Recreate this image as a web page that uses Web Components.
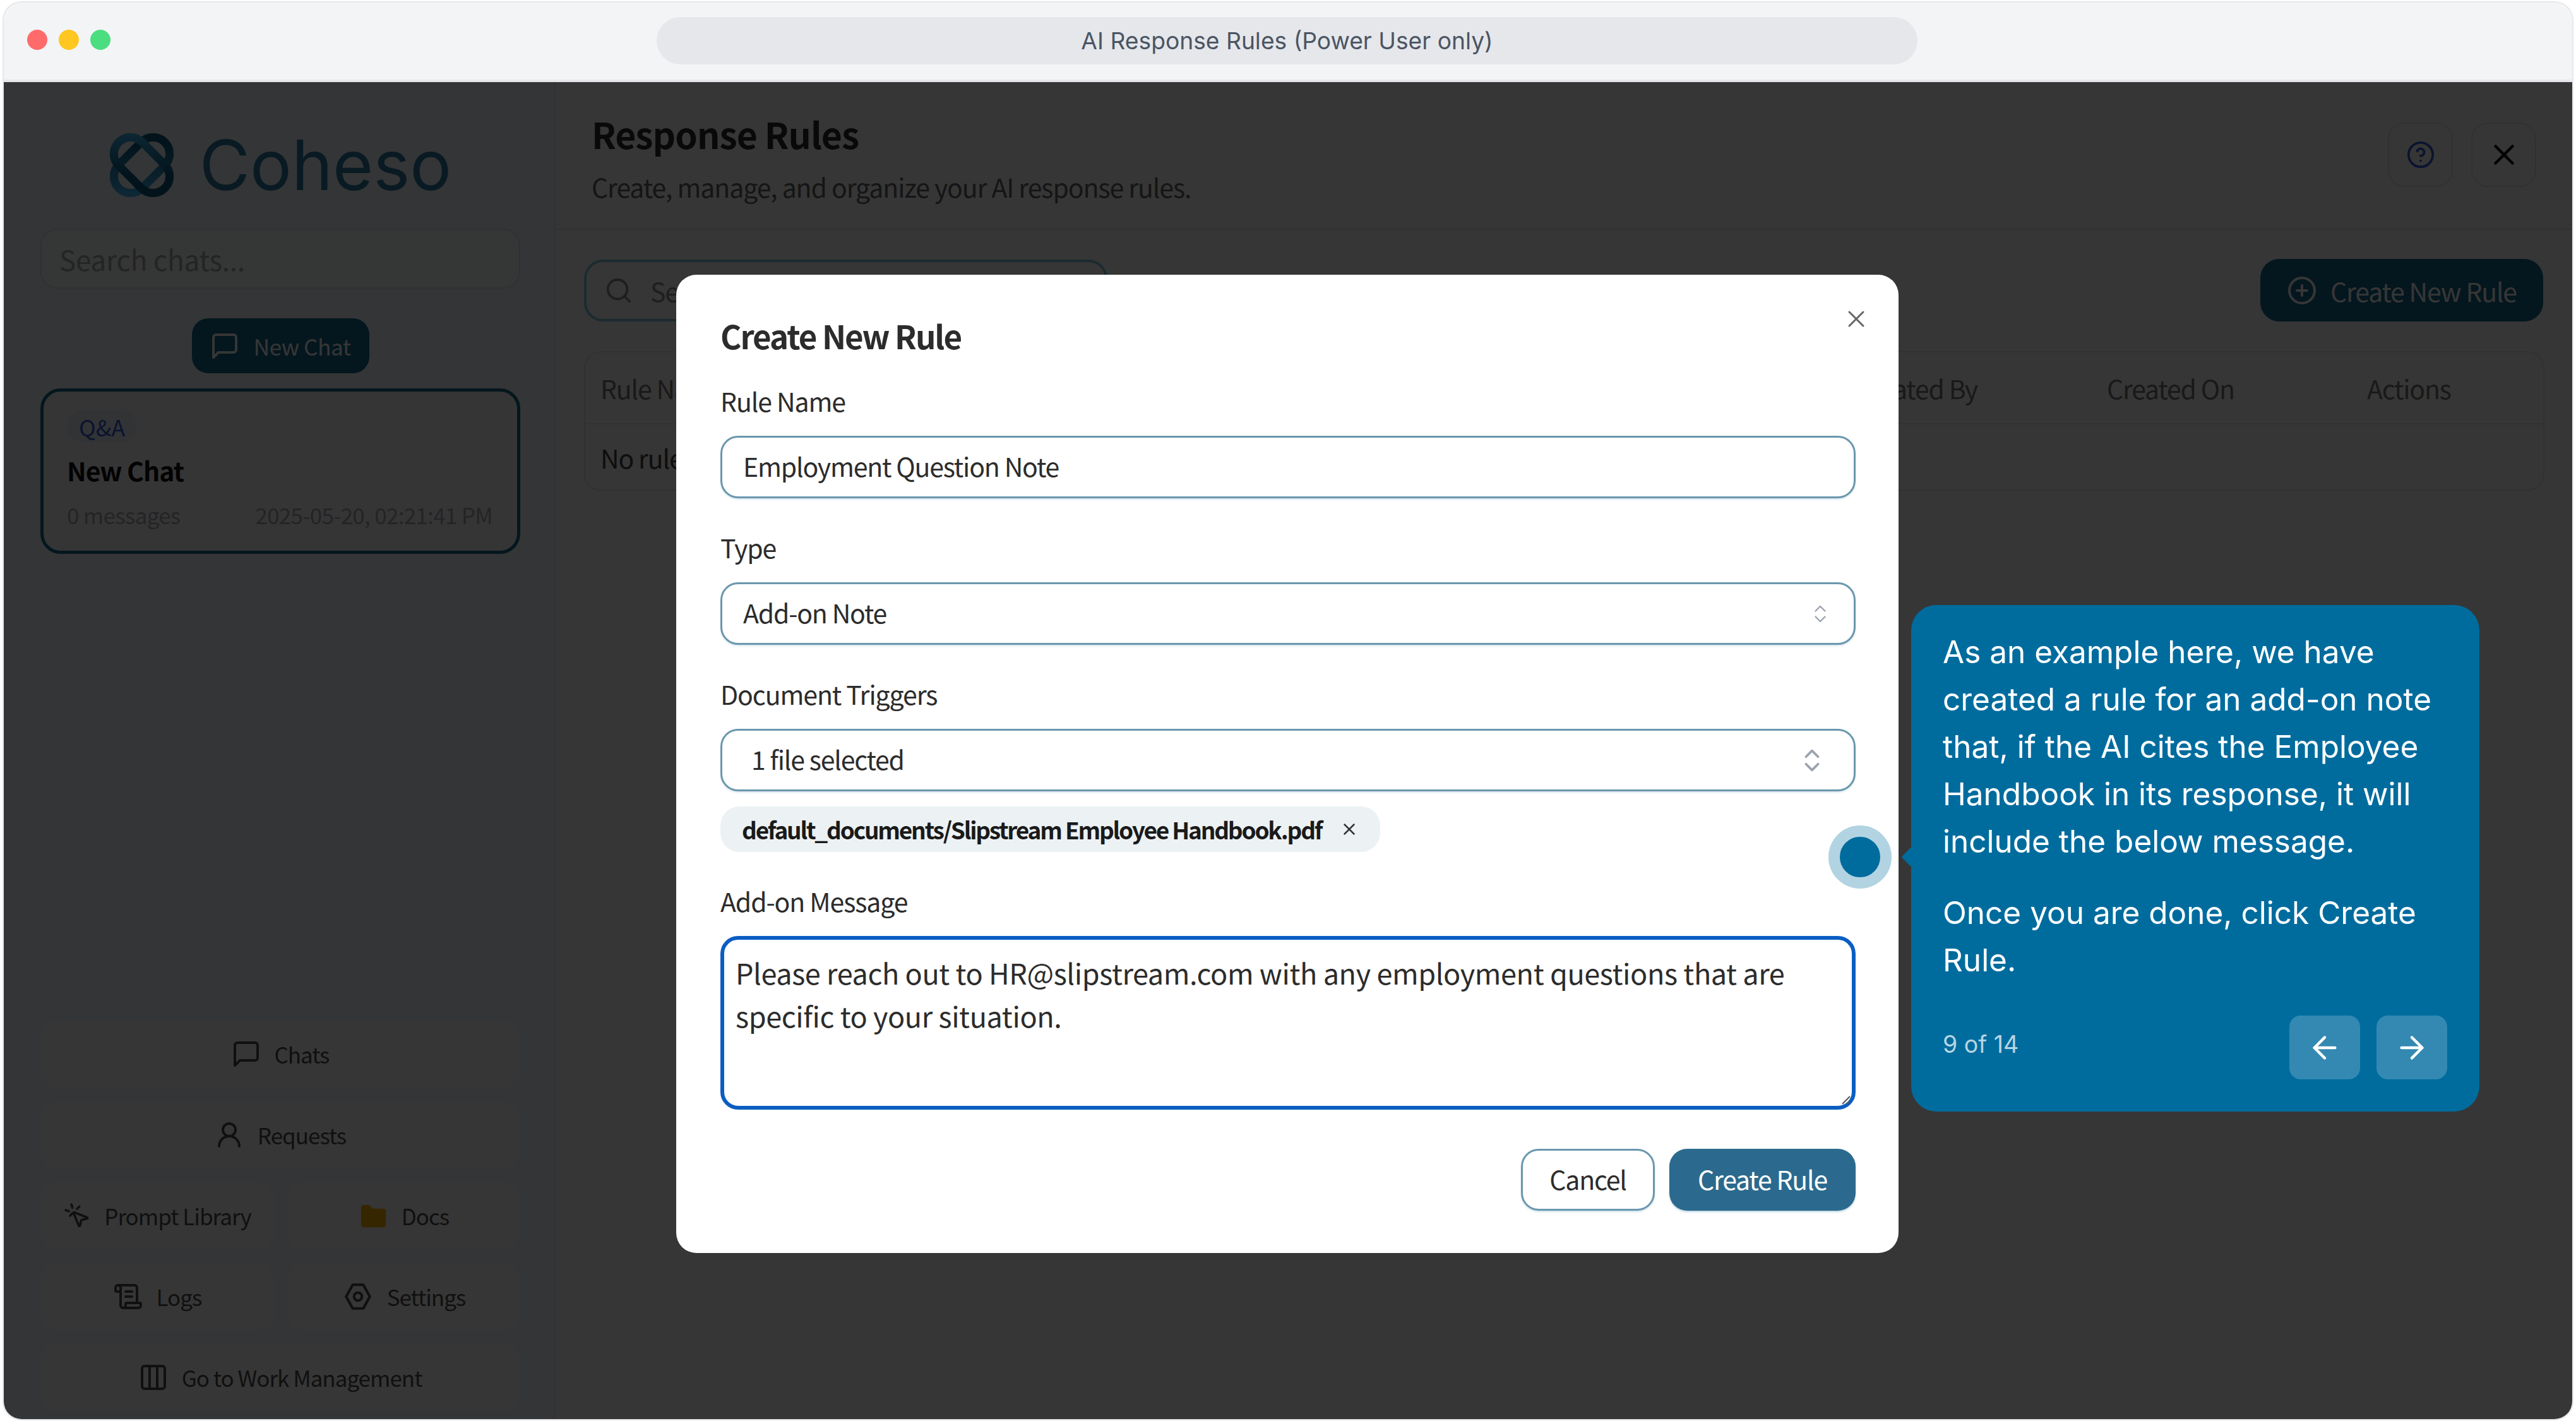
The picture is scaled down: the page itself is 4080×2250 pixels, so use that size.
<!DOCTYPE html>
<html lang="en">
<head>
<meta charset="utf-8">
<title>AI Response Rules</title>
<style>
  html, body { margin: 0; padding: 0; background: #fff; }
  body { width: 4080px; height: 2250px; overflow: hidden; font-family: "Noto Sans CJK SC", "Liberation Sans", sans-serif; letter-spacing: -1.2px; }
</style>
</head>
<body>
<app-window>
  <title-bar slot="bar">AI Response Rules (Power User only)</title-bar>
  <side-bar slot="side"></side-bar>
  <rules-page slot="page"></rules-page>
  <rule-modal slot="over"></rule-modal>
  <tour-beacon slot="over"></tour-beacon>
  <tour-tip slot="over" count="9 of 14">
    <p>As an example here, we have created a rule for an add-on note that, if the AI cites the Employee Handbook in its response, it will include the below message.</p>
    <p>Once you are done, click Create Rule.</p>
  </tour-tip>
</app-window>

<script>
const icons = {
  chat: '<path d="M21 15a2 2 0 0 1-2 2H7l-4 4V5a2 2 0 0 1 2-2h14a2 2 0 0 1 2 2z"/>',
  user: '<circle cx="12" cy="8" r="5"/><path d="M20 21a8 8 0 0 0-16 0"/>',
  pointer: '<path d="M14 4.1 12 6"/><path d="m5.1 8-2.9-.8"/><path d="m6 12 1.9-2"/><path d="M7.2 2.2 8 5.1"/><path d="M9.037 9.69a.498.498 0 0 1 .653-.653l11 4.5a.5.5 0 0 1-.074.949l-4.349 1.041a1 1 0 0 0-.74.739l-1.04 4.35a.5.5 0 0 1-.95.074z"/>',
  folder: '<path fill="currentColor" stroke="none" d="M20 21a2 2 0 0 0 2-2V8a2 2 0 0 0-2-2h-7.9a2 2 0 0 1-1.69-.9L9.6 3.9A2 2 0 0 0 7.93 3H4a2 2 0 0 0-2 2v14a2 2 0 0 0 2 2Z"/>',
  scroll: '<path d="M15 8h-5"/><path d="M15 12h-5"/><path d="M19 17V5a2 2 0 0 0-2-2H4"/><path d="M8 21h12a2 2 0 0 0 2-2v-1a1 1 0 0 0-1-1H11a1 1 0 0 0-1 1v1a2 2 0 1 1-4 0V5a2 2 0 1 0-4 0v2a1 1 0 0 0 1 1h3"/>',
  hex: '<path d="M8 3h8l5 9-5 9H8l-5-9z"/><circle cx="12" cy="12" r="3"/>',
  columns: '<rect x="3" y="3" width="18" height="18" rx="2"/><path d="M9 3v18"/><path d="M15 3v18"/>',
  search: '<circle cx="11" cy="11" r="8"/><path d="m21 21-4.3-4.3"/>',
  updown: '<path d="m7 15 5 5 5-5"/><path d="m7 9 5-5 5 5"/>',
  help: '<circle cx="12" cy="12" r="10"/><path d="M9.09 9a3 3 0 0 1 5.83 1c0 2-3 3-3 3"/><path d="M12 17h.01"/>',
  plus: '<circle cx="12" cy="12" r="10"/><path d="M8 12h8"/><path d="M12 8v8"/>',
  x: '<path d="M18 6 6 18"/><path d="m6 6 12 12"/>',
  left: '<path d="m12 19-7-7 7-7"/><path d="M19 12H5"/>',
  right: '<path d="M5 12h14"/><path d="m12 5 7 7-7 7"/>',
};

class IconGlyph extends HTMLElement {
  connectedCallback() {
    const size = this.getAttribute("size") || 36;
    const weight = this.getAttribute("weight") || 2;
    this.attachShadow({ mode: "open" }).innerHTML = `
      <style>:host { display: inline-flex; flex: none; } svg { display: block; }</style>
      <svg width="${size}" height="${size}" viewBox="0 0 24 24" fill="none" stroke="currentColor"
        stroke-width="${weight}" stroke-linecap="round" stroke-linejoin="round">${icons[this.getAttribute("name")]}</svg>`;
  }
}
customElements.define("icon-glyph", IconGlyph);

const windowT = document.createElement("template");
windowT.innerHTML = `
  <style>
    :host {
      display: flex;
      flex-direction: column;
      position: relative;
      box-sizing: border-box;
      width: 4072px;
      height: 2247px;
      margin: 2px 4px 0;
      border: 2px solid #e5e7eb;
      border-radius: 30px;
      overflow: hidden;
      background: #fff;
    }
    .body { flex: 1; display: flex; min-height: 0; }
    .shade { position: absolute; inset: 126px 0 0 0; background: rgba(0, 0, 0, .79); }
  </style>
  <slot name="bar"></slot>
  <div class="body">
    <slot name="side"></slot>
    <slot name="page"></slot>
  </div>
  <div class="shade"></div>
  <slot name="over"></slot>
`;
class AppWindow extends HTMLElement {
  constructor() {
    super();
    this.attachShadow({ mode: "open" });
    this.shadowRoot.appendChild(windowT.content.cloneNode(true));
  }
}
customElements.define("app-window", AppWindow);

const barT = document.createElement("template");
barT.innerHTML = `
  <style>
    :host {
      display: flex;
      align-items: flex-start;
      box-sizing: border-box;
      height: 126px;
      padding: 23px 0 0 37px;
      background: #f3f4f6;
      border-bottom: 4px solid #e5e7eb;
    }
    .dots { display: flex; gap: 18px; margin-top: 20px; }
    .dots i { width: 32px; height: 32px; border-radius: 50%; }
    .addr {
      display: flex; align-items: center; justify-content: center;
      width: 1997px; height: 75px; margin-left: 865px;
      border-radius: 38px;
      background: #e5e7eb;
      color: #4b5563;
      font: 37.2px Inter, sans-serif;
      letter-spacing: 0;
    }
  </style>
  <div class="dots"><i style="background:#ff6b6b"></i><i style="background:#ffc71f"></i><i style="background:#4ade80"></i></div>
  <div class="addr"><slot></slot></div>
`;
class TitleBar extends HTMLElement {
  constructor() {
    super();
    this.attachShadow({ mode: "open" });
    this.shadowRoot.appendChild(barT.content.cloneNode(true));
  }
}
customElements.define("title-bar", TitleBar);

const navT = document.createElement("template");
navT.innerHTML = `
  <style>
    :host {
      display: flex; align-items: center; justify-content: center; gap: 21px;
      height: 106px;
      border-radius: 26px;
      background: #fff;
      color: #4d4d4d;
      font-size: 35px;
      letter-spacing: -1px;
      line-height: 48px;
    }
  </style>
  <slot></slot>
`;
class SideButton extends HTMLElement {
  constructor() {
    super();
    this.attachShadow({ mode: "open" });
    this.shadowRoot.appendChild(navT.content.cloneNode(true));
  }
}
customElements.define("side-button", SideButton);

const cardT = document.createElement("template");
cardT.innerHTML = `
  <style>
    :host {
      display: block;
      box-sizing: border-box;
      height: 262px;
      margin-top: 24px;
      padding: 29px 39px 0 37px;
      border: 5px solid #13698f;
      border-radius: 32px;
      background: #f8fbfe;
    }
    .tag {
      display: inline-flex; align-items: center; justify-content: center;
      width: 111px; height: 52px;
      border-radius: 26px;
      background: #ebf0f7;
      color: #2f5fdc;
      font-size: 36px;
      letter-spacing: 0;
    }
    .name { margin-top: 14px; color: #111; font-size: 41px; font-weight: 700; letter-spacing: -1px; line-height: 58px; }
    .meta {
      display: flex; justify-content: space-between;
      margin-top: 18px;
      color: #a8acb0;
      font-size: 35px;
      letter-spacing: -.7px;
      line-height: 48px;
    }
  </style>
  <div class="tag">Q&amp;A</div>
  <div class="name">New Chat</div>
  <div class="meta"><span>0 messages</span><span>2025-05-20, 02:21:41 PM</span></div>
`;
class ChatCard extends HTMLElement {
  constructor() {
    super();
    this.attachShadow({ mode: "open" });
    this.shadowRoot.appendChild(cardT.content.cloneNode(true));
  }
}
customElements.define("chat-card", ChatCard);

const sideT = document.createElement("template");
sideT.innerHTML = `
  <style>
    :host {
      display: flex;
      flex-direction: column;
      flex: none;
      box-sizing: border-box;
      width: 874px;
      padding: 81px 54px 13px 58px;
      background: #f3fbff;
      border-right: 2px solid #e8edf1;
    }
    .logo { display: flex; align-items: center; justify-content: center; gap: 40px; height: 101px; }
    .word { color: #2a7ba5; font: 400 110px/101px Inter, sans-serif; letter-spacing: 0; }
    .find {
      display: flex; align-items: center;
      height: 95px; margin-top: 50px; padding-left: 28px; box-sizing: border-box;
      border: 2px solid #e2e6ea; border-radius: 26px;
      background: #fafcfe;
      color: #a8acb0;
      font-size: 44px;
      letter-spacing: -.2px;
    }
    .new {
      display: flex; align-items: center; justify-content: center; gap: 21px;
      align-self: center;
      width: 281px; height: 87px; margin-top: 47px;
      border-radius: 26px;
      background: #13698f;
      color: #fff;
      font-size: 35.5px;
      letter-spacing: -.6px;
    }
    .nav { display: grid; grid-template-columns: 370px 367px; column-gap: 22px; row-gap: 22px; margin-top: auto; }
    .wide { grid-column: 1 / 3; }
    .docs { color: #ffb300; }
  </style>
  <div class="logo">
    <svg width="103" height="101" viewBox="0 0 100 100" fill="none">
      <defs>
        <linearGradient id="a" gradientUnits="userSpaceOnUse" x1="10" y1="10" x2="90" y2="90"><stop offset="0" stop-color="#47c0ff"/><stop offset=".65" stop-color="#0a5a80"/></linearGradient>
        <linearGradient id="b" gradientUnits="userSpaceOnUse" x1="10" y1="90" x2="90" y2="10"><stop offset=".05" stop-color="#47c0ff"/><stop offset=".8" stop-color="#0a5a80"/></linearGradient>
      </defs>
      <g stroke-width="13">
        <rect x="-1" y="24" width="102" height="52" rx="26" transform="rotate(-45 50 50)" stroke="url(#b)"/>
        <rect x="-1" y="24" width="102" height="52" rx="26" transform="rotate(45 50 50)" stroke="url(#a)"/>
      </g>
    </svg>
    <span class="word">Coheso</span>
  </div>
  <div class="find">Search chats...</div>
  <div class="new"><icon-glyph name="chat" size="48"></icon-glyph><span>New Chat</span></div>
  <chat-card></chat-card>
  <div class="nav">
    <side-button class="wide"><icon-glyph name="chat" size="48"></icon-glyph>Chats</side-button>
    <side-button class="wide"><icon-glyph name="user" size="48"></icon-glyph>Requests</side-button>
    <side-button><icon-glyph name="pointer" size="44"></icon-glyph>Prompt Library</side-button>
    <side-button><icon-glyph class="docs" name="folder" size="47"></icon-glyph>Docs</side-button>
    <side-button><icon-glyph name="scroll" size="48"></icon-glyph>Logs</side-button>
    <side-button><icon-glyph name="hex" size="50"></icon-glyph>Settings</side-button>
    <side-button class="wide"><icon-glyph name="columns" size="48"></icon-glyph>Go to Work Management</side-button>
  </div>
`;
class SideBar extends HTMLElement {
  constructor() {
    super();
    this.attachShadow({ mode: "open" });
    this.shadowRoot.appendChild(sideT.content.cloneNode(true));
  }
}
customElements.define("side-bar", SideBar);

const pageT = document.createElement("template");
pageT.innerHTML = `
  <style>
    :host { display: flex; flex-direction: column; flex: 1; min-width: 0; background: #fff; font-size: 41px; }
    header {
      display: flex; justify-content: space-between;
      box-sizing: border-box;
      height: 234px;
      padding: 64px 57px 0 57px;
      border-bottom: 2px solid #e8e8e8;
    }
    h1 { margin: -18px 0 0; color: #2b2b2b; font-size: 57px; font-weight: 700; letter-spacing: -1px; line-height: 70px; }
    .sub { margin-top: 19px; color: #666; font-size: 41px; letter-spacing: -1.1px; line-height: 60px; }
    .tools { display: flex; gap: 29px; }
    .tools div {
      display: flex; align-items: center; justify-content: center;
      box-sizing: border-box;
      width: 103px; height: 102px;
      border: 2px solid #e2e6ea; border-radius: 26px;
    }
    .help { color: #2f5fdc; }
    .shut { color: #111; }
    .row {
      display: flex; justify-content: space-between; align-items: center;
      margin: 46px 46px 0 45px;
    }
    .search {
      display: flex; align-items: center; gap: 27px;
      box-sizing: border-box;
      width: 829px; height: 98px; padding-left: 28px;
      border: 4px solid #85c8e4; border-radius: 30px;
      color: #8f8f8f;
    }
    .add {
      display: flex; align-items: center; justify-content: center; gap: 21px;
      width: 448px; height: 99px;
      border-radius: 30px;
      background: #13698f;
      color: #fff;
    }
    .table { margin: 47px 44px 0 45px; border: 2px solid #e2e6ea; border-radius: 26px; }
    .head {
      display: grid; grid-template-columns: 2011px 399px 412px auto;
      align-items: center;
      box-sizing: border-box;
      height: 114px;
      border-bottom: 2px solid #e8e8e8;
      color: #777;
    }
    .head span:first-child, .none { padding-left: 24px; }
    .none { display: flex; align-items: center; height: 103px; color: #444; }
  </style>
  <header>
    <div>
      <h1>Response Rules</h1>
      <div class="sub">Create, manage, and organize your AI response rules.</div>
    </div>
    <div class="tools">
      <div class="help"><icon-glyph name="help" size="46"></icon-glyph></div>
      <div class="shut"><icon-glyph name="x" size="54"></icon-glyph></div>
    </div>
  </header>
  <div class="row">
    <div class="search"><icon-glyph name="search" size="46"></icon-glyph><span>Search rules...</span></div>
    <div class="add"><icon-glyph name="plus" size="48"></icon-glyph><span>Create New Rule</span></div>
  </div>
  <div class="table">
    <div class="head"><span>Rule Name</span><span>Created By</span><span>Created On</span><span>Actions</span></div>
    <div class="none">No rules</div>
  </div>
`;
class RulesPage extends HTMLElement {
  constructor() {
    super();
    this.attachShadow({ mode: "open" });
    this.shadowRoot.appendChild(pageT.content.cloneNode(true));
  }
}
customElements.define("rules-page", RulesPage);

const fieldT = document.createElement("template");
fieldT.innerHTML = `
  <style>
    :host { display: block; margin-top: 47px; }
    label { display: block; margin-bottom: 26px; color: #2c2c2c; font-size: 41px; letter-spacing: -1.1px; line-height: 60px; }
  </style>
  <label></label>
  <slot></slot>
`;
class FormField extends HTMLElement {
  constructor() {
    super();
    this.attachShadow({ mode: "open" });
    this.shadowRoot.appendChild(fieldT.content.cloneNode(true));
    this.shadowRoot.querySelector("label").textContent = this.getAttribute("label");
  }
}
customElements.define("form-field", FormField);

const boxT = document.createElement("template");
boxT.innerHTML = `
  <style>
    :host {
      display: flex; align-items: center; justify-content: space-between;
      box-sizing: border-box;
      height: 99px;
      padding: 0 33px 5px;
      border: 3px solid #6a97ad;
      border-radius: 28px;
      background: #fff;
      box-shadow: 0 2px 3px rgba(60, 130, 170, .2);
      color: #2c2c2c;
      font-size: 41px;
    }
  </style>
  <slot></slot>
`;
class ControlBox extends HTMLElement {
  constructor() {
    super();
    this.attachShadow({ mode: "open" });
    this.shadowRoot.appendChild(boxT.content.cloneNode(true));
  }
}
customElements.define("control-box", ControlBox);

const modalT = document.createElement("template");
modalT.innerHTML = `
  <style>
    :host {
      display: block;
      position: absolute;
      left: 1065px;
      top: 431px;
      box-sizing: border-box;
      width: 1936px;
      height: 1549px;
      padding: 61px 68px 0 70px;
      border-radius: 32px;
      background: #fff;
    }
    h2 { margin: 0 0 -9px; color: #2c2c2c; font-size: 51px; font-weight: 700; letter-spacing: -2px; line-height: 70px; }
    .close { position: absolute; right: 45px; top: 48px; color: #666; }
    .chev { color: #9ca3af; margin-top: 5px; }
    .first { margin-right: 2px; }
    .pick { padding-left: 13px; }
    .far { margin-right: 10px; }
    .chip {
      display: inline-flex; align-items: center; gap: 29px;
      box-sizing: border-box;
      height: 72px; margin-top: 24px; padding: 0 34px;
      border-radius: 30px;
      background: #ecf1f4;
      color: #1a1a1a;
      font-size: 37px;
      font-weight: 700;
      letter-spacing: -2.2px;
    }
    .chip icon-glyph { color: #333; }
    .note {
      box-sizing: border-box;
      height: 275px;
      padding: 18px 18px 0;
      border: 6px solid #0a5ec2;
      border-radius: 28px;
      position: relative;
      color: #2c2c2c;
      font-size: 45px;
      letter-spacing: -.4px;
      line-height: 68px;
    }
    .grip { position: absolute; right: 2px; bottom: 2px; }
    .btns { display: flex; justify-content: flex-end; gap: 23px; margin-top: 62px; }
    .btns div {
      display: flex; align-items: center; justify-content: center;
      box-sizing: border-box;
      height: 98px;
      padding-bottom: 4px;
      border-radius: 28px;
      font-size: 41px;
    }
    .cancel { width: 212px; border: 3px solid #6a97ad; color: #2c2c2c; box-shadow: 0 2px 3px rgba(60, 130, 170, .25); }
    .make { width: 295px; background: #2b6a8e; color: #fff; box-shadow: 0 2px 3px rgba(60, 130, 170, .35); }
  </style>
  <h2>Create New Rule</h2>
  <div class="close"><icon-glyph name="x" size="44" weight="1.6"></icon-glyph></div>
  <form-field label="Rule Name"><control-box>Employment Question Note</control-box></form-field>
  <form-field label="Type">
    <control-box><span>Add-on Note</span><icon-glyph class="chev first" name="updown" size="36" weight="1.6"></icon-glyph></control-box>
  </form-field>
  <form-field label="Document Triggers">
    <control-box><span class="pick">1 file selected</span><icon-glyph class="chev far" name="updown" size="46" weight="2"></icon-glyph></control-box>
    <div class="chip"><span>default_documents/Slipstream Employee Handbook.pdf</span><icon-glyph name="x" size="30"></icon-glyph></div>
  </form-field>
  <form-field label="Add-on Message">
    <div class="note">Please reach out to HR@slipstream.com with any employment questions that are specific to your situation.
      <svg class="grip" width="16" height="16" viewBox="0 0 16 16" stroke="#555" stroke-width="2"><path d="M15 3 3 15M15 10l-5 5"/></svg>
    </div>
  </form-field>
  <div class="btns"><div class="cancel">Cancel</div><div class="make">Create Rule</div></div>
`;
class RuleModal extends HTMLElement {
  constructor() {
    super();
    this.attachShadow({ mode: "open" });
    this.shadowRoot.appendChild(modalT.content.cloneNode(true));
  }
}
customElements.define("rule-modal", RuleModal);

const beaconT = document.createElement("template");
beaconT.innerHTML = `
  <style>
    :host {
      display: block;
      position: absolute;
      left: 2890px;
      top: 1303px;
      box-sizing: border-box;
      width: 100px;
      height: 100px;
      border: 18px solid #b2d3e2;
      border-radius: 50%;
      background: #006c9e;
    }
  </style>
`;
class TourBeacon extends HTMLElement {
  constructor() {
    super();
    this.attachShadow({ mode: "open" });
    this.shadowRoot.appendChild(beaconT.content.cloneNode(true));
  }
}
customElements.define("tour-beacon", TourBeacon);

const tipT = document.createElement("template");
tipT.innerHTML = `
  <style>
    :host {
      display: block;
      position: absolute;
      left: 3021px;
      top: 954px;
      box-sizing: border-box;
      width: 900px;
      height: 802px;
      padding: 37px 50px 0 50px;
      border-radius: 40px;
      background: #006c9e;
      color: #fff;
      font: 49.5px/75px Inter, sans-serif;
      letter-spacing: 0;
    }
    :host::before {
      content: '';
      position: absolute;
      left: -11px;
      top: 388px;
      width: 22px;
      height: 22px;
      background: #006c9e;
      transform: rotate(45deg);
      border-radius: 3px;
    }
    ::slotted(p) { margin: 0 0 38px; }
    .foot { display: flex; justify-content: space-between; align-items: center; margin-top: 50px; }
    .count { margin-top: -10px; color: rgba(255, 255, 255, .72); font-size: 37.5px; line-height: 48px; }
    .nav { display: flex; gap: 26px; margin-right: 1px; }
    .nav div {
      display: flex; align-items: center; justify-content: center;
      width: 112px; height: 101px;
      border-radius: 18px;
      background: rgba(255, 255, 255, .2);
    }
  </style>
  <slot></slot>
  <div class="foot">
    <span class="count"></span>
    <div class="nav">
      <div><icon-glyph name="left" size="56" weight="1.9"></icon-glyph></div>
      <div><icon-glyph name="right" size="56" weight="1.9"></icon-glyph></div>
    </div>
  </div>
`;
class TourTip extends HTMLElement {
  constructor() {
    super();
    this.attachShadow({ mode: "open" });
    this.shadowRoot.appendChild(tipT.content.cloneNode(true));
    this.shadowRoot.querySelector(".count").textContent = this.getAttribute("count");
  }
}
customElements.define("tour-tip", TourTip);
</script>
</body>
</html>
